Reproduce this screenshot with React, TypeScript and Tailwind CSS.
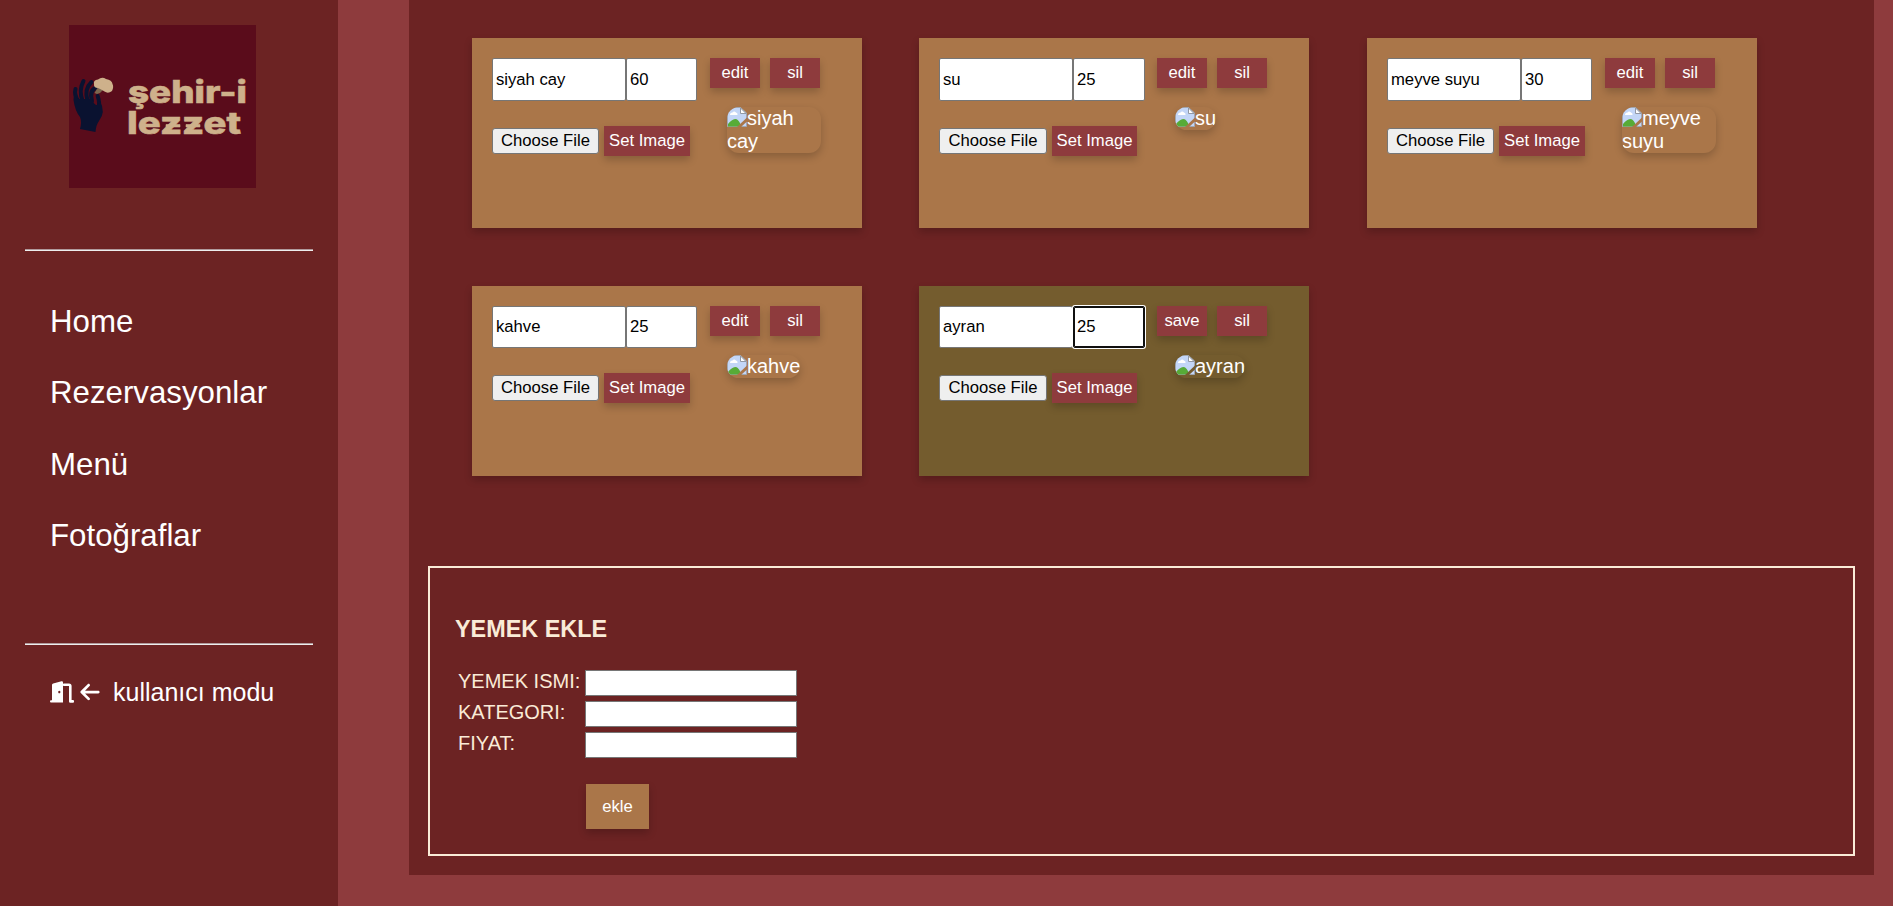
import { FaArrowLeft } from "react-icons/fa6";

type Item = { name: string; price: string; editing?: boolean; lower?: boolean; middle?: boolean };

const items: Item[] = [
  { name: "siyah cay", price: "60" },
  { name: "su", price: "25", middle: true },
  { name: "meyve suyu", price: "30" },
  { name: "kahve", price: "25", lower: true },
  { name: "ayran", price: "25", editing: true, lower: true, middle: true },
];

const links = ["Home", "Rezervasyonlar", "Menü", "Fotoğraflar"];

const shadow = "shadow-[0_4px_8px_rgba(0,0,0,0.2)]";

function Logo() {
  return (
    <div className="ml-[69px] mt-[25px] flex h-[163px] w-[187px] bg-[#5a0c1b]">
      <svg viewBox="0 0 187 163" className="h-[163px] w-[187px]">
        <g stroke="#0a1230" fill="none" strokeLinecap="round" strokeLinejoin="round">
          <path d="M9 76 Q5 69 6.500 64" strokeWidth="4" />
          <path d="M13.500 76 Q9.500 65 14.500 56" strokeWidth="4" />
          <path d="M18.500 76 Q15 64 22.500 57" strokeWidth="4" />
          <path d="M23 76 Q20 65 27.500 62.500" strokeWidth="4" />
          <path d="M29.500 84 Q31 78 28.700 71" strokeWidth="4" />
        </g>
        <path
          d="M5 68 Q7 74 10 74 H23 Q25 80 28 80 L31 76 Q37 87 30 96 Q27 100 26.500 107 L11 104 Q13 97 11 92 Q6 86 4.500 75Z"
          fill="#0a1230"
        />
        <path d="M25.500 68 L29 62 L35 64 L31 68 L28 69Z" fill="#7b674f" />
        <path
          d="M25 59 Q24 55 29 54.500 Q33 51.500 37 54 Q43 55 43.500 59 Q45 62 43 66 Q39 69 35.500 66.500 Q32 64 29 63 Q24.500 63 25 59Z"
          fill="#ceb18b"
        />
        <g
          fill="#ceb18b"
          stroke="#ceb18b"
          strokeWidth="0.600"
          fontWeight="800"
          fontSize="31"
          className="font-['Inter','Open_Sans',sans-serif]"
        >
          <text x="59" y="78" textLength="119" lengthAdjust="spacingAndGlyphs">şehir-i</text>
          <text x="58" y="109" textLength="114" lengthAdjust="spacingAndGlyphs">lezzet</text>
          <path d="M97 99.500h14v2.500h-14zM117 99.500h14v2.500h-14z" />
        </g>
      </svg>
    </div>
  );
}

function DoorIcon() {
  return (
    <svg viewBox="0 0 24 22" className="h-[22px] w-[24px] shrink-0">
      <path
        fillRule="evenodd"
        fill="#fff"
        d="M2 4 Q2 2.800 3.200 2.500 L11.500 .2 Q13 0 13 1.400 V21.500 H1 Q0 21.500 0 20.400 T1 19.300 H2Z M9.300 9.700 a1.100 1.300 0 1 0 .01 0Z"
      />
      <path
        d="M14 3.800 H19 Q20.300 3.800 20.300 5 V20.400 H23"
        fill="none"
        stroke="#fff"
        strokeWidth="2.600"
        strokeLinecap="round"
        strokeLinejoin="round"
      />
    </svg>
  );
}

function BrokenImage() {
  return (
    <svg viewBox="0 0 20 20" className="inline-block h-[20px] w-[20px] align-[-2px]">
      <path d="M.5 .5H13.500L19.500 6V19.500H.5Z" fill="#c3d6f7" stroke="#a0a7b3" />
      <path d="M3 8Q3 5.500 5.500 5.500Q7 3.500 9 5.500Q11 6 10.500 8Z" fill="#fff" />
      <path d="M1 19.500V17Q5 12 9 12Q12 12.500 14.500 19.500Z" fill="#57ab37" />
      <path d="M13.500 1V6.500H19Z" fill="#fff" stroke="#9299a5" />
      <path d="M20 10.500L10 20H14L20 14.500Z" className="fill-(--card)" />
    </svg>
  );
}

function Button({ label, className }: { label: string; className: string }) {
  return (
    <button className={`h-[30px] bg-[#8e3b3d] pb-px text-[16.67px] leading-[20px] ${shadow} ${className}`}>
      {label}
    </button>
  );
}

function Card({ name, price, editing, lower, middle }: Item) {
  const inputHeight = lower ? "h-[42px]" : "h-[43px]";
  return (
    <article
      className={`flex h-[190px] w-[390px] bg-(--card) p-[20px] ${shadow} ${
        editing ? "[--card:#745c2e]" : "[--card:#aa7649]"
      }`}
    >
      <div className="w-[218px]">
        <div className="flex text-[16.67px] text-black">
          <input
            defaultValue={name}
            className={`w-[134px] rounded-[2px] border border-[#767676] bg-white px-[3px] ${inputHeight}`}
          />
          <input
            defaultValue={price}
            className={`rounded-[2px] border bg-white px-[3px] ${middle ? "w-[72px]" : "w-[71px]"} ${inputHeight} ${
              editing ? "border-[#101010] shadow-[inset_0_0_0_1px_#101010,0_0_0_1px_#fff]" : "border-[#767676]"
            }`}
          />
        </div>
        <div className="mt-[25px] flex items-center gap-[5px]">
          <button
            className={`h-[26px] rounded-[3px] border border-[#767676] bg-[#efefef] pb-px text-[16.67px] leading-[20px] text-black ${
              middle ? "w-[108px]" : "w-[107px]"
            }`}
          >
            Choose File
          </button>
          <Button label="Set Image" className={middle ? "w-[85px] whitespace-nowrap" : "w-[86px]"} />
        </div>
      </div>
      <div>
        <div className="flex gap-[10px]">
          <Button label={editing ? "save" : "edit"} className="w-[50px]" />
          <Button label="sil" className="w-[50px]" />
        </div>
        <div
          className={`mt-[19px] w-fit max-w-[94px] overflow-hidden rounded-[12px] text-[20px] leading-[23px] ${
            middle ? "ml-[18px]" : "ml-[17px]"
          } ${shadow}`}
        >
          <BrokenImage />
          {name}
        </div>
      </div>
    </article>
  );
}

export default function App() {
  return (
    <div className="flex h-[906px] w-full overflow-hidden bg-[#8e3b3d] font-['Liberation_Sans',Arial,sans-serif] text-white">
      <aside className="h-full w-[338px] shrink-0 bg-[#6c2323]">
        <Logo />
        <div className="mx-[25px] mt-[61px] h-[2px] border-t border-[#b09a9c] bg-[#eee]" />
        <nav className="ml-[50px] mt-[53px] flex flex-col gap-[35.300px] text-[31.250px] leading-[36px]">
          {links.map((l) => (
            <a key={l}>{l}</a>
          ))}
        </nav>
        <div className="mx-[25px] mt-[89px] h-[2px] border-t border-[#b09a9c] bg-[#eee]" />
        <a className="ml-[50px] mt-[33px] flex items-center text-[25px] leading-[29px]">
          <DoorIcon />
          <FaArrowLeft className="ml-[5px] size-[22px]" />
          <span className="ml-[12px]">kullanıcı modu</span>
        </a>
      </aside>
      <main className="ml-[71px] h-[875px] w-[1465px] shrink-0 bg-[#6c2323]">
        <section className="ml-[63px] grid grid-cols-[447px_448px_447px] gap-y-[58px] pt-[38px]">
          {items.map((i) => (
            <Card key={i.name} {...i} />
          ))}
        </section>
        <section className="ml-[19px] mt-[90px] h-[290px] w-[1427px] border-2 border-[#faebd7] px-[25px] pt-[46px] text-[#faebd7]">
          <h3 className="text-[23.400px] font-bold leading-[30px]">YEMEK EKLE</h3>
          <div className="ml-[3px] mt-[26px] grid grid-cols-[127px_212px] gap-y-[5px] text-[20px] leading-[26px]">
            {["YEMEK ISMI:", "KATEGORI:", "FIYAT:"].map((l) => (
              <label key={l} className="contents">
                <span className="-mt-[2px] whitespace-nowrap">{l}</span>
                <input className="h-[26px] w-[212px] border border-[#767676] bg-white" />
              </label>
            ))}
          </div>
          <button
            className={`ml-[131px] mt-[26px] h-[45px] w-[63px] bg-[#aa7649] text-[16.67px] text-white ${shadow}`}
          >
            ekle
          </button>
        </section>
      </main>
    </div>
  );
}
